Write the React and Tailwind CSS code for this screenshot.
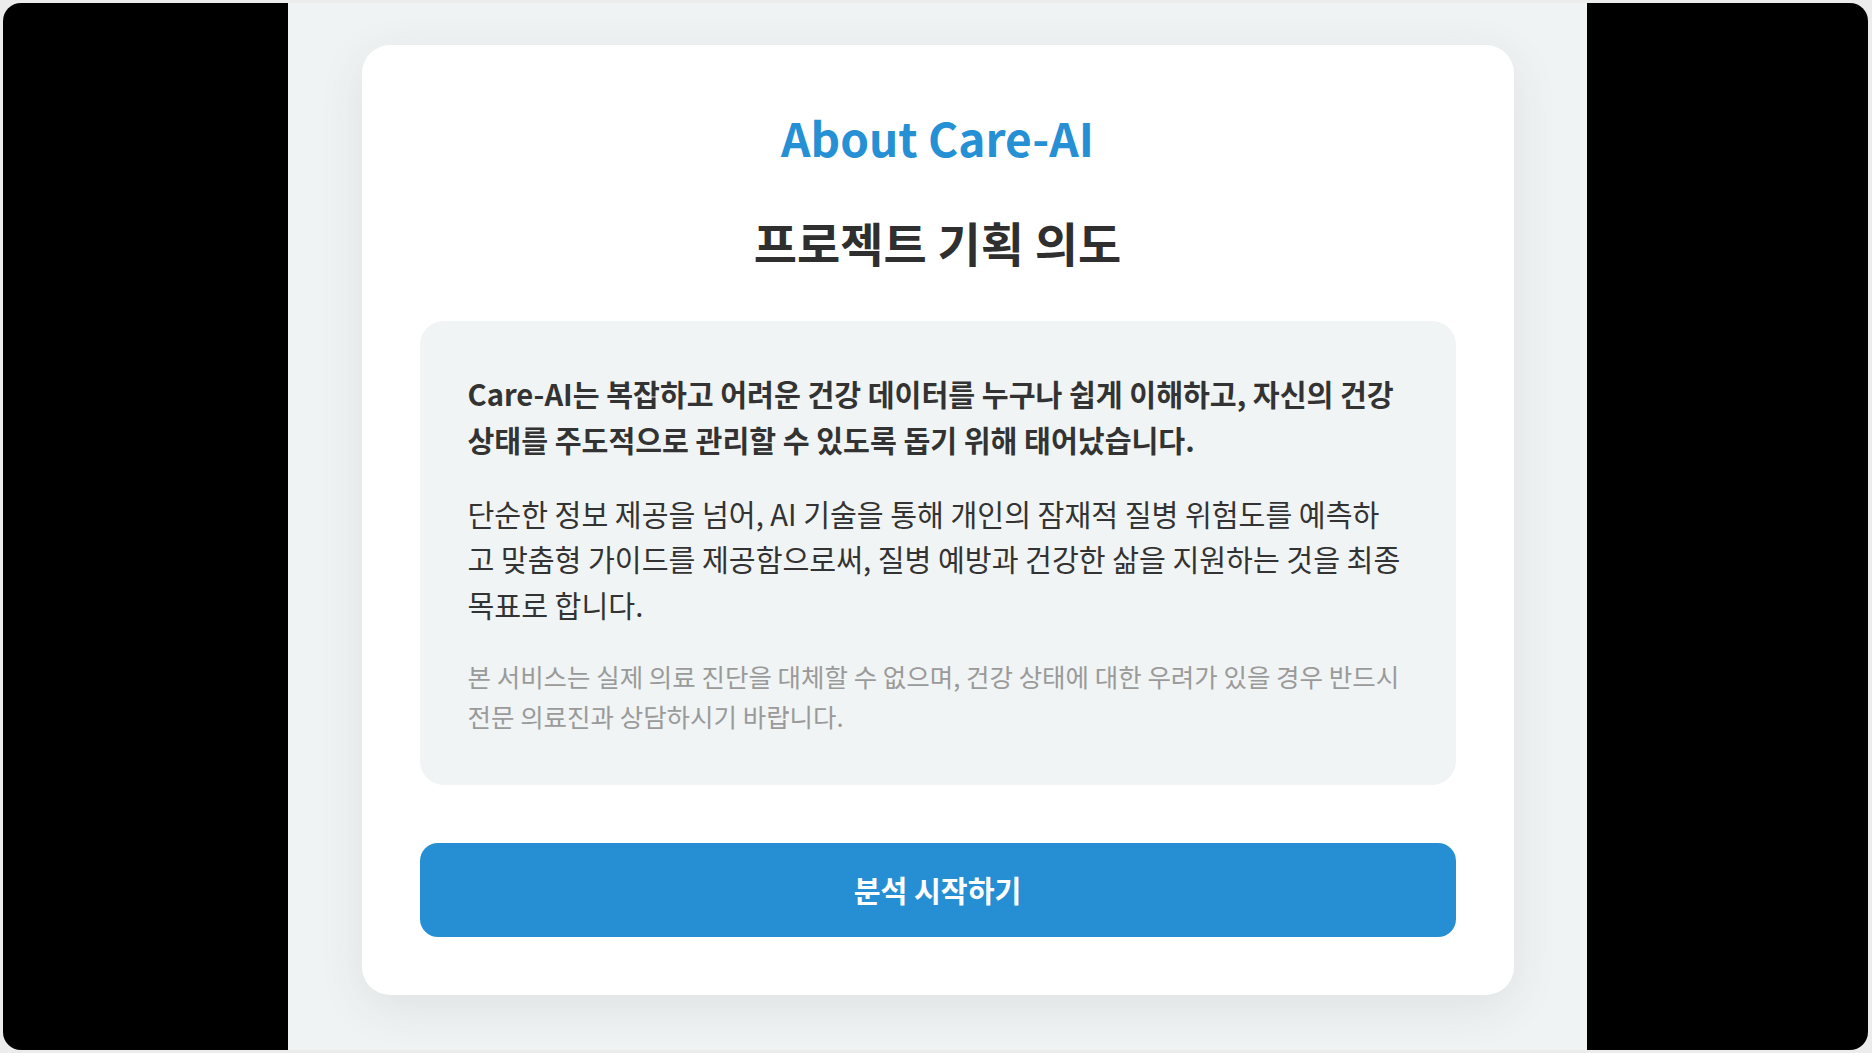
export default function App() {
  return (
    <div
      className="h-screen w-full bg-[#ececec] pt-[3px] pb-[3px] pl-[3px] pr-[4px]"
      style={{ fontFamily: '"Noto Sans CJK KR", "Noto Sans", sans-serif' }}
    >
      <div className="flex h-full overflow-hidden rounded-[18px] bg-black pl-[285px]">
        <main className="h-full w-[1299px] bg-[#f0f3f3] pt-[42px]">
          <section className="mx-auto w-[1152px] rounded-[28px] bg-white px-[58px] pt-[58px] pb-[58px] shadow-[0_12px_48px_rgba(40,60,60,0.09)]">
            <h1 className="text-center text-[46px] font-bold leading-[69px] text-[#2690d5]">
              About Care-AI
            </h1>
            <h2 className="mt-[35px] text-center text-[47px] font-bold leading-[69px] text-[#2f2f2f]">
              프로젝트 기획 의도
            </h2>

            <div className="mt-[45px] rounded-[24px] bg-[#f1f4f4] px-[48px] pt-[50px] pb-[49px]">
              <p className="whitespace-nowrap text-[29.2px] font-bold leading-[45.6px] text-[#333333]">
                Care-AI는 복잡하고 어려운 건강 데이터를 누구나 쉽게 이해하고, 자신의 건강
                <br />
                상태를 주도적으로 관리할 수 있도록 돕기 위해 태어났습니다.
              </p>
              <p className="mt-[28.5px] whitespace-nowrap text-[29.2px] leading-[45.6px] text-[#333333]">
                단순한 정보 제공을 넘어, AI 기술을 통해 개인의 잠재적 질병 위험도를 예측하
                <br />
                고 맞춤형 가이드를 제공함으로써, 질병 예방과 건강한 삶을 지원하는 것을 최종
                <br />
                목표로 합니다.
              </p>
              <p className="mt-[28.5px] whitespace-nowrap text-[25.5px] leading-[39.8px] text-[#9a9a9a]">
                본 서비스는 실제 의료 진단을 대체할 수 없으며, 건강 상태에 대한 우려가 있을 경우 반드시
                <br />
                전문 의료진과 상담하시기 바랍니다.
              </p>
            </div>

            <button
              type="button"
              className="mt-[58px] flex h-[94px] w-full items-center justify-center rounded-[18px] bg-[#268fd4] text-[29.2px] font-bold text-white"
            >
              분석 시작하기
            </button>
          </section>
        </main>
      </div>
    </div>
  )
}
